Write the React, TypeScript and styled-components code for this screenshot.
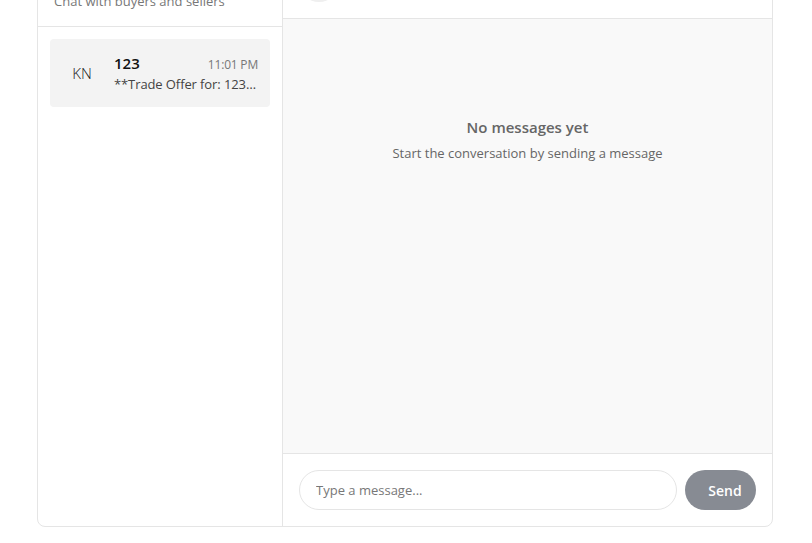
import React from "react";
import styled, { createGlobalStyle } from "styled-components";

const Global = createGlobalStyle`
  html, body { margin: 0; padding: 0; background: #ffffff; overflow: hidden; }
  body { font-family: "Open Sans", "Noto Sans", Arial, sans-serif; color: #222; }
  * { box-sizing: border-box; }
`;

const Page = styled.div`
  margin-top: -55px;
  padding: 0 39px 16px 37px;
`;

const Card = styled.div`
  display: grid;
  grid-template-columns: 245px 1fr;
  height: 582px;
  border: 1px solid #e5e5e5;
  border-radius: 8px;
  overflow: hidden;
  background: #fff;
`;

const Sidebar = styled.aside`
  display: flex;
  flex-direction: column;
  border-right: 1px solid #e5e5e5;
  min-width: 0;
`;

const SidebarHeader = styled.div`
  padding: 16px 16px 16px;
  border-bottom: 1px solid #e5e5e5;
`;

const Title = styled.h2`
  margin: 0 0 2px;
  font-size: 20px;
  line-height: 28px;
  font-weight: 700;
  color: #222;
`;

const Subtitle = styled.p`
  margin: 0;
  font-size: 13px;
  line-height: 18px;
  color: #777;
`;

const List = styled.div`
  padding: 12px;
  display: flex;
  flex-direction: column;
  gap: 8px;
`;

const Item = styled.div<{ $active?: boolean }>`
  display: flex;
  align-items: center;
  gap: 12px;
  padding: 14px 12px;
  border-radius: 4px;
  background: ${(p) => (p.$active ? "#f3f3f3" : "transparent")};
`;

const Avatar = styled.div`
  width: 40px;
  height: 40px;
  flex: 0 0 40px;
  border-radius: 50%;
  display: flex;
  align-items: center;
  justify-content: center;
  font-size: 15px;
  font-weight: 300;
  color: #222;
  background: transparent;
`;

const ItemBody = styled.div`
  flex: 1;
  min-width: 0;
`;

const ItemTop = styled.div`
  display: flex;
  justify-content: space-between;
  align-items: baseline;
`;

const Name = styled.span`
  font-size: 15px;
  font-weight: 600;
  color: #111;
  line-height: 20px;
`;

const Time = styled.span`
  font-size: 12px;
  color: #777;
  letter-spacing: -0.2px;
`;

const Preview = styled.div`
  margin-top: 2px;
  font-size: 13px;
  line-height: 18px;
  letter-spacing: -0.1px;
  color: #444;
  white-space: nowrap;
  overflow: hidden;
  text-overflow: ellipsis;
`;

const Main = styled.section`
  display: flex;
  flex-direction: column;
  min-width: 0;
`;

const ChatHeader = styled.div`
  display: flex;
  align-items: center;
  gap: 12px;
  padding: 16px;
  border-bottom: 1px solid #e5e5e5;
`;

const HeaderAvatar = styled.div`
  width: 40px;
  height: 40px;
  border-radius: 50%;
  background: #efefef;
`;

const Messages = styled.div`
  flex: 1;
  background: #f9f9f9;
  padding: 97px 16px 16px;
  display: flex;
  flex-direction: column;
  align-items: center;
  border-bottom: 1px solid #e5e5e5;
`;

const EmptyTitle = styled.div`
  font-size: 15px;
  line-height: 22px;
  font-weight: 600;
  color: #666;
`;

const EmptyText = styled.div`
  margin-top: 6px;
  font-size: 13px;
  line-height: 18px;
  color: #666;
`;

const Composer = styled.form`
  display: flex;
  gap: 8px;
  padding: 16px;
`;

const Input = styled.input`
  flex: 1;
  height: 40px;
  border: 1px solid #e5e5e5;
  border-radius: 20px;
  padding: 0 16px;
  font-family: inherit;
  font-size: 13px;
  outline: none;
  &::placeholder { color: #777; }
`;

const SendButton = styled.button`
  width: 71px;
  height: 40px;
  border: none;
  border-radius: 20px;
  background: #878b93;
  color: #fff;
  font-family: inherit;
  font-size: 14px;
  font-weight: 600;
  padding: 0 0 0 9px;
`;

export default function App() {
  return (
    <>
      <Global />
      <Page>
        <Card>
          <Sidebar>
            <SidebarHeader>
              <Title>Messages</Title>
              <Subtitle>Chat with buyers and sellers</Subtitle>
            </SidebarHeader>
            <List>
              <Item $active>
                <Avatar>KN</Avatar>
                <ItemBody>
                  <ItemTop>
                    <Name>123</Name>
                    <Time>11:01 PM</Time>
                  </ItemTop>
                  <Preview>**Trade Offer for: 123** Offered price: $50</Preview>
                </ItemBody>
              </Item>
            </List>
          </Sidebar>
          <Main>
            <ChatHeader>
              <HeaderAvatar />
            </ChatHeader>
            <Messages>
              <EmptyTitle>No messages yet</EmptyTitle>
              <EmptyText>Start the conversation by sending a message</EmptyText>
            </Messages>
            <Composer onSubmit={(e) => e.preventDefault()}>
              <Input placeholder="Type a message..." />
              <SendButton type="submit" disabled>Send</SendButton>
            </Composer>
          </Main>
        </Card>
      </Page>
    </>
  );
}
